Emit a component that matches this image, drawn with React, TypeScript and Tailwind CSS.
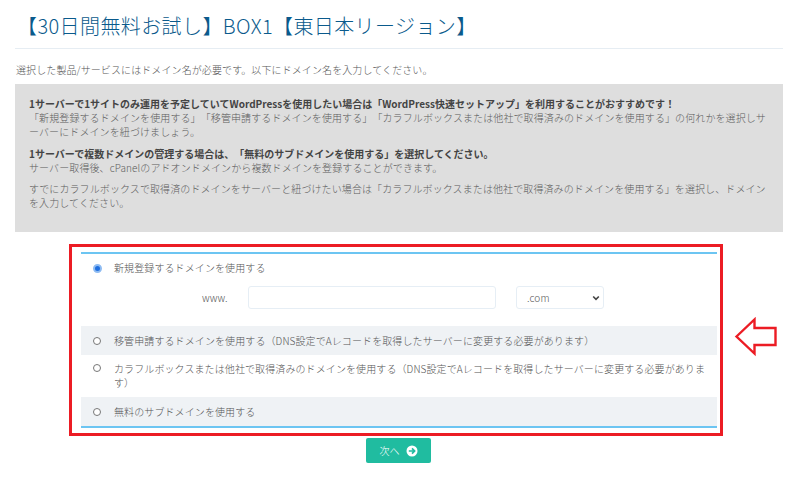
import React from "react";

const font = { fontFamily: '"Noto Sans CJK JP", sans-serif' };

function Radio({ checked = false, top = "mt-[1px]" }: { checked?: boolean; top?: string }) {
  return checked ? (
    <span className={`${top} h-[9px] w-[9px] shrink-0 rounded-full border-2 border-[#8fbcf2] bg-[#1f6fe0]`} />
  ) : (
    <span className={`${top} h-[8px] w-[8px] shrink-0 rounded-full border border-[#777] bg-white`} />
  );
}

export default function App() {
  return (
    <div className="relative h-[488px] w-[800px] overflow-hidden bg-white text-[10px] font-light tracking-[0.1px] text-[#555] [text-spacing-trim:space-all]" style={font}>
      <div className="pl-[15px] pr-[17px]">
        <div className="h-[49px] border-b border-[#e6edf3] pt-[11px]">
          <h1 className="pl-[2px] text-[20px] leading-[30px] font-light tracking-[0.02em] text-[#0a5a8c]">【30日間無料お試し】BOX1【東日本リージョン】</h1>
        </div>
        <p className="mt-[14px] pl-[1px] text-[10px] leading-[14px]">選択した製品/サービスにはドメイン名が必要です。以下にドメイン名を入力してください。</p>
        <div className="mt-[7px] h-[148px] bg-[#dedede] px-[14px] pt-[13px] text-[10px] leading-[14px] text-[#5c5c5c]">
          <p className="font-bold tracking-normal text-[#444]">1サーバーで1サイトのみ運用を予定していてWordPressを使用したい場合は「WordPress快速セットアップ」を利用することがおすすめです！</p>
          <p>「新規登録するドメインを使用する」「移管申請するドメインを使用する」「カラフルボックスまたは他社で取得済みのドメインを使用する」の何れかを選択しサーバーにドメインを紐づけましょう。</p>
          <p className="mt-[8px] font-bold tracking-normal text-[#444]">1サーバーで複数ドメインの管理する場合は、「無料のサブドメインを使用する」を選択してください。</p>
          <p>サーバー取得後、cPanelのアドオンドメインから複数ドメインを登録することができます。</p>
          <p className="mt-[7px]">すでにカラフルボックスで取得済のドメインをサーバーと紐づけたい場合は「カラフルボックスまたは他社で取得済みのドメインを使用する」を選択し、ドメインを入力してください。</p>
        </div>
      </div>
      <div className="ml-[69px] mt-[12px] w-[654px] border-[3px] border-[#ec1c24] pl-[9px] pr-[3px] pt-[5px] pb-[5px] leading-[14px]">
        <div className="border-y-2 border-[#6cc5f2]">
          <div className="h-[72px] pl-[12px] pt-[7px]">
            <div className="flex items-center gap-[12px]">
              <Radio checked top="mt-0" />
              <span>新規登録するドメインを使用する</span>
            </div>
            <div className="mt-[11px] flex items-center">
              <span className="ml-[109px] w-[46px] text-[10px]">www.</span>
              <span className="h-[23px] w-[248px] rounded-[3px] border border-[#e6eef5] bg-white" />
              <span className="ml-[20px] flex h-[23px] w-[88px] items-center justify-between rounded-[3px] border border-[#e6eef5] bg-white pl-[10px] pr-[3px]">
                .com
                <svg width="8" height="8" viewBox="0 0 8 8" fill="none" stroke="#444" strokeWidth="1.6"><path d="M1.2 2.5 4 5.4 6.8 2.5" /></svg>
              </span>
            </div>
          </div>
          <div className="flex h-[29px] items-center gap-[13px] bg-[#eff2f5] pl-[12px]">
            <Radio />
            <span>移管申請するドメインを使用する（DNS設定でAレコードを取得したサーバーに変更する必要があります）</span>
          </div>
          <div className="flex h-[42px] items-start gap-[13px] pl-[12px] pt-[7px]">
            <Radio top="mt-[2px]" />
            <span>カラフルボックスまたは他社で取得済みのドメインを使用する（DNS設定でAレコードを取得したサーバーに変更する必要がありま<br />す）</span>
          </div>
          <div className="flex h-[29px] items-center gap-[13px] bg-[#eff2f5] pl-[12px]">
            <Radio />
            <span>無料のサブドメインを使用する</span>
          </div>
        </div>
      </div>
      <div className="mt-[2px] flex justify-center pr-[3px]">
        <button className="flex h-[25px] w-[65px] items-center justify-center gap-[6px] rounded-[2px] bg-[#20bca0] text-[10px] text-white">
          次へ
          <svg width="12" height="12" viewBox="0 0 12 12"><circle cx="6" cy="6" r="5.5" fill="#fff" /><path d="M2.8 6h5.6M6 3.4 8.6 6 6 8.6" fill="none" stroke="#20bca0" strokeWidth="1.7" /></svg>
        </button>
      </div>
      <svg className="absolute left-[734px] top-[317px]" width="44" height="40" viewBox="0 0 44 40" fill="#fff" stroke="#ec1c24" strokeWidth="2.4"><path d="M2.5 19.5 20.5 2.5V11H41.5V28H20.5V36.5Z" /></svg>
    </div>
  );
}
